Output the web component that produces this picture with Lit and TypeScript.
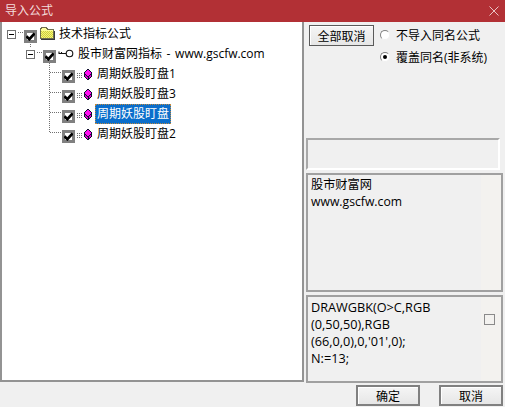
import { LitElement, html, css, svg } from "lit";
import { customElement } from "lit/decorators.js";

const check = html`<svg class="tick" viewBox="0 0 7 7" width="9" height="9"><path d="M0.3 3.3 L2.6 5.6 L6.7 1" fill="none" stroke="#000" stroke-width="2.1"/></svg>`;

const folder = html`<svg class="ico" width="16" height="13" viewBox="0 0 16 13" shape-rendering="crispEdges">
  <defs><pattern id="dither" width="2" height="2" patternUnits="userSpaceOnUse"><rect width="2" height="2" fill="#ffff66"/><rect width="1" height="1" fill="#c8c850"/><rect x="1" y="1" width="1" height="1" fill="#c8c850"/></pattern></defs>
  <path d="M1.5 3.5 V1.5 H2.5 V0.5 H7.5 V1.5 H8.5 V2.5 H14.5 V11.5 H1.5 Z" fill="#ffff99" stroke="#6e6e50"/>
  <rect x="2" y="4" width="12" height="7" fill="url(#dither)"/>
  <path d="M15.5 4 V12.5 H2" fill="none" stroke="#3c3c3c"/>
</svg>`;

const key = html`<svg class="ico" width="16" height="10" viewBox="0 0 16 10">
  <circle cx="11.5" cy="4.5" r="3.3" fill="#fff" stroke="#111" stroke-width="1.1"/>
  <path d="M8 4.5 H0.5 M1 4.5 V2.5 M3.5 4.5 V3" fill="none" stroke="#111" stroke-width="1.1"/>
</svg>`;

const gem = html`<svg class="ico gem" width="16" height="12" viewBox="0 0 16 12" shape-rendering="crispEdges">
  <path d="M0 4.5 H6 M0 6.5 H6 M0 8.5 H6" stroke="#707070" stroke-dasharray="1 1"/>
  <path d="M10 0 H12 V1 H13 V2 H14 V3 H15 V8 H14 V9 H13 V10 H12 V11 H10 V10 H9 V9 H8 V8 H7 V3 H8 V2 H9 V1 H10 Z" fill="#101030"/>
  <path d="M10 1 H12 V2 H13 V3 H14 V5 H13 V6 H12 V7 H10 V6 H9 V5 H8 V3 H9 V2 H10 Z" fill="#ff10f0"/>
  <path d="M8 6 H9 V7 H10 V9 H9 V8 H8 Z M12 7 H13 V6 H14 V8 H13 V9 H12 Z M11 8 V10 H10 V8 Z" fill="#e000d0"/>
</svg>`;

interface Row { label: string; level: 0 | 1 | 2; icon: unknown; expander?: boolean; selected?: boolean; }

const rows: Row[] = [
  { label: "技术指标公式", level: 0, icon: folder, expander: true },
  { label: "股市财富网指标 - www.gscfw.com", level: 1, icon: key, expander: true },
  { label: "周期妖股盯盘1", level: 2, icon: gem },
  { label: "周期妖股盯盘3", level: 2, icon: gem },
  { label: "周期妖股盯盘", level: 2, icon: gem, selected: true },
  { label: "周期妖股盯盘2", level: 2, icon: gem },
];

const connectors = svg`
  <path d="M17.5 12.5 H24 M30.5 22 V28 M36.5 32.5 H43 M49.5 41 V112.5 M49.5 52.5 H62 M49.5 72.5 H62 M49.5 92.5 H62 M49.5 112.5 H62"
    fill="none" stroke="#707070" stroke-dasharray="1 1" shape-rendering="crispEdges"/>`;

@customElement("app-root")
export class AppRoot extends LitElement {
  static styles = css`
    :host { display: block; width: 505px; height: 407px; overflow: hidden; font-family: "Open Sans", "Noto Sans CJK SC", sans-serif; font-size: 12px; color: #000; }
    .win { width: 505px; height: 407px; background: #f0f0f0; display: flex; flex-direction: column; }
    .title { height: 22px; flex: none; background: #b23035; color: #f3dcdc; display: flex; align-items: center; justify-content: space-between; padding: 0 6px 0 5px; line-height: 22px; box-sizing: border-box; }
    .main { height: 360px; flex: none; display: flex; }
    .tree { width: 304px; flex: none; box-sizing: border-box; background: #fff; border: 2px solid #939393; border-top: none; position: relative; padding-top: 2px; }
    .lines { position: absolute; left: -2px; top: -2px; width: 304px; height: 150px; pointer-events: none; }
    .row { height: 20px; display: flex; align-items: flex-start; line-height: 20px; white-space: nowrap; word-spacing: 1.5px; }
    .l0 { padding-left: 5px; }
    .l1 { padding-left: 24px; }
    .l2 { padding-left: 60px; }
    .slot { width: 17px; flex: none; }
    .exp { width: 9px; height: 9px; box-sizing: border-box; border: 1px solid #707070; background: #fff; margin-top: 6px; display: flex; align-items: center; justify-content: center; }
    .exp::after { content: ""; width: 5px; height: 1px; background: #000; }
    .cb { width: 13px; height: 13px; flex: none; box-sizing: border-box; border: 3px solid #808080; background: #fff; margin-top: 6px; display: flex; align-items: center; justify-content: center; position: relative; z-index: 1; }
    .tick { flex: none; margin: -1px; }
    .icoslot { width: 22px; flex: none; height: 20px; position: relative; }
    .ico { position: absolute; left: 2px; top: 3px; }
    .l1 .ico { top: 5px; }
    .l2 .ico { left: 2px; top: 5px; }
    .label { padding: 0 2px; margin-left: -2px; }
    .sel { background: #0b6ecb; color: #fff; outline: 1px dotted #c08a40; outline-offset: -1px; }
    .side { width: 201px; flex: none; display: flex; flex-direction: column; }
    .opts { height: 116px; flex: none; display: flex; box-sizing: border-box; padding: 2px 0 0 5px; }
    button { font: inherit; color: #000; padding: 0; background: linear-gradient(#f5f5f5, #e6e6e6); }
    .all { width: 65px; height: 21px; box-sizing: border-box; border: 1px solid #5a5a5a; box-shadow: inset 1px 1px 0 #fff; margin-top: 1px; }
    .radios { margin-left: 6px; display: flex; flex-direction: column; }
    .radio { height: 22px; display: flex; align-items: center; gap: 6px; white-space: nowrap; }
    .dot { width: 10px; height: 10px; box-sizing: border-box; border-radius: 50%; background: #fff; border: 1px solid #808080; border-right-color: #f0f0f0; border-bottom-color: #f0f0f0; display: flex; align-items: center; justify-content: center; }
    .dot.on::after { content: ""; width: 4px; height: 4px; border-radius: 50%; background: #000; }
    .sunken { margin: 0 0 3px 2px; width: 194px; height: 32px; flex: none; box-sizing: border-box; border: 2px solid #fff; border-top-color: #a8a8a8; border-left-color: #a8a8a8; }
    .memo { margin-left: 2px; width: 197px; flex: none; box-sizing: border-box; border: 2px solid #a0a0a0; display: flex; line-height: 17px; font-size: 12.5px; }
    .memo1 { height: 119px; margin-bottom: 3px; }
    .memo2 { height: 88px; }
    .txt { flex: 1; padding: 1px 0 0 3px; white-space: nowrap; }
    .memo1 .txt { font-size: 12.2px; }
    .memo2 .txt { padding-top: 2px; font-size: 12.7px; }
    .bar { width: 20px; flex: none; background: #f3f2ef; display: flex; justify-content: flex-start; align-items: flex-start; }
    .box { width: 11px; height: 11px; box-sizing: border-box; border: 1px solid #8a8a8a; margin: 17px 0 0 3px; }
    .foot { flex: 1; display: flex; justify-content: flex-end; gap: 19px; padding: 3px 2px 1px 0; }
    .foot button { width: 64px; height: 21px; box-sizing: border-box; border: 2px solid #808080; box-shadow: inset 1px 1px 0 #fff; }
  `;

  render() {
    return html`<div class="win">
      <div class="title"><span>导入公式</span>
        <svg width="10" height="10" viewBox="0 0 10 10"><path d="M0.5 0.5 L9.5 9.5 M9.5 0.5 L0.5 9.5" stroke="#e9c4c4" stroke-width="1"/></svg>
      </div>
      <div class="main">
        <div class="tree">
          <svg class="lines" viewBox="0 0 304 150">${connectors}</svg>
          ${rows.map((r) => html`<div class="row l${r.level}">
            ${r.expander ? html`<div class="slot"><div class="exp"></div></div>` : ""}
            <div class="cb">${check}</div>
            <div class="icoslot">${r.icon}</div>
            <span class="label ${r.selected ? "sel" : ""}">${r.label}</span>
          </div>`)}
        </div>
        <div class="side">
          <div class="opts">
            <button class="all">全部取消</button>
            <div class="radios">
              <div class="radio"><span class="dot"></span>不导入同名公式</div>
              <div class="radio"><span class="dot on"></span>覆盖同名(非系统)</div>
            </div>
          </div>
          <div class="sunken"></div>
          <div class="memo memo1">
            <div class="txt">股市财富网<br />www.gscfw.com</div>
            <div class="bar"></div>
          </div>
          <div class="memo memo2">
            <div class="txt">DRAWGBK(O&gt;C,RGB<br />(0,50,50),RGB<br />(66,0,0),0,'01',0);<br />N:=13;</div>
            <div class="bar"><div class="box"></div></div>
          </div>
        </div>
      </div>
      <div class="foot"><button>确定</button><button>取消</button></div>
    </div>`;
  }
}
